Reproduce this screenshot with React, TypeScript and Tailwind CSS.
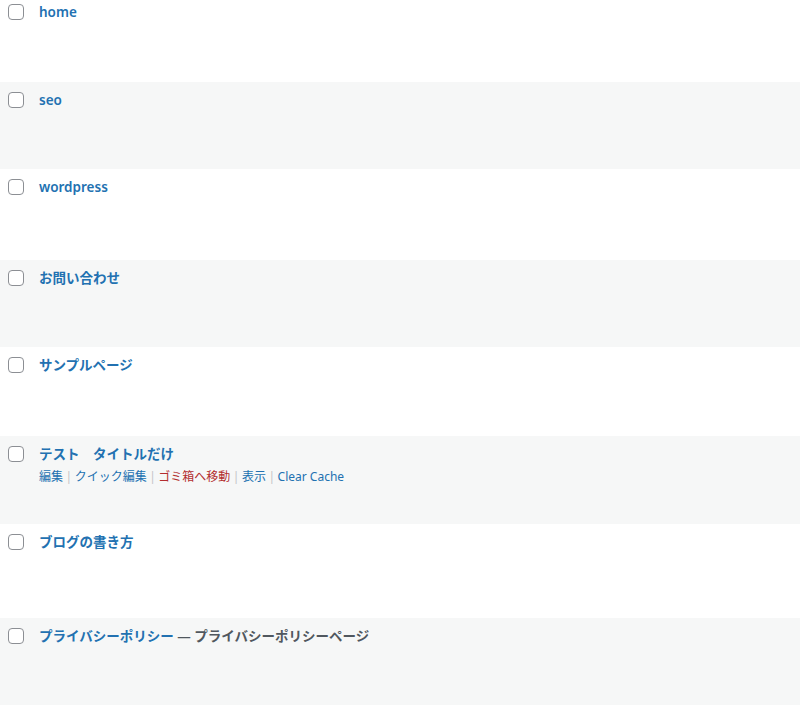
import React from 'react';

type Row = { title: string; suffix?: string; h: string; actions?: boolean };

const rows: Row[] = [
  { title: 'home', h: 'h-[88px]' },
  { title: 'seo', h: 'h-[87px]' },
  { title: 'wordpress', h: 'h-[91px]' },
  { title: 'お問い合わせ', h: 'h-[87px]' },
  { title: 'サンプルページ', h: 'h-[89px]' },
  { title: 'テスト　タイトルだけ', h: 'h-[88px]', actions: true },
  { title: 'ブログの書き方', h: 'h-[94px]' },
  { title: 'プライバシーポリシー', suffix: ' — プライバシーポリシーページ', h: 'h-[87px]' },
];

const Sep = () => <span className="text-[#c3c4c7] px-[2.5px]">|</span>;

export default function App() {
  return (
    <div
      className="w-[800px] h-[705px] overflow-hidden bg-white text-[13px] leading-[1.5]"
      style={{ fontFamily: '"Noto Sans", "Noto Sans CJK JP", sans-serif' }}
    >
      <div className="-mt-[6px]">
        {rows.map((r, i) => (
          <div key={r.title} className={`${r.h} flex ${i % 2 === 1 ? 'bg-[#f6f7f7]' : 'bg-white'}`}>
            <div className="w-[39px] shrink-0 pl-[8px] pt-[10px]">
              <div className="w-[16px] h-[16px] rounded-[4px] border border-[#8c8f94] bg-white" />
            </div>
            <div className="pt-[8px]">
              <div className="font-semibold text-[13.5px] leading-[20px]">
                <span className="text-[#2271b1]">{r.title}</span>
                {r.suffix && <span className="text-[#50575e]">{r.suffix}</span>}
              </div>
              {r.actions && (
                <div className="mt-[4px] text-[12px] text-[#2271b1]">
                  <span>編集</span>
                  <Sep />
                  <span>クイック編集</span>
                  <Sep />
                  <span className="text-[#b32d2e]">ゴミ箱へ移動</span>
                  <Sep />
                  <span>表示</span>
                  <Sep />
                  <span>Clear Cache</span>
                </div>
              )}
            </div>
          </div>
        ))}
      </div>
    </div>
  );
}
